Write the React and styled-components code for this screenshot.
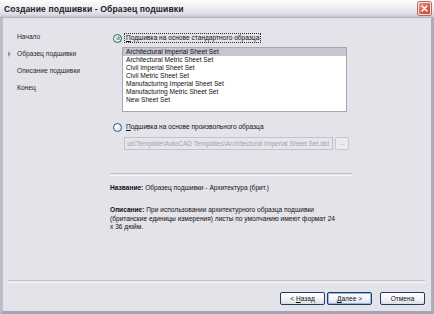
import React from 'react';
import styled, { createGlobalStyle } from 'styled-components';

const GlobalStyle = createGlobalStyle`
  html, body {
    margin: 0;
    padding: 0;
    background: #ffffff;
  }
  body {
    font-family: "Liberation Sans", Arial, sans-serif;
  }
`;

const Window = styled.div`
  width: 434px;
  height: 314px;
  display: flex;
  flex-direction: column;
  overflow: hidden;
`;

const TitleBar = styled.div`
  height: 18px;
  box-sizing: border-box;
  display: flex;
  align-items: center;
  justify-content: space-between;
  padding: 0 3px 0 4px;
  background: linear-gradient(#fdfdfe 0%, #eeeef4 45%, #dcdce6 85%, #c4c4d2 100%);
  border-bottom: 1px solid #b4b4c4;
`;

const Title = styled.span`
  font-size: 8.6px;
  font-weight: bold;
  color: #222222;
  letter-spacing: 0.1px;
`;

const CloseButton = styled.div`
  width: 13px;
  height: 13px;
  box-sizing: border-box;
  border: 1px solid #f4e4e0;
  border-radius: 2px;
  background: linear-gradient(135deg, #ec9a86 0%, #d8604a 55%, #c24a36 100%);
  display: flex;
  align-items: center;
  justify-content: center;
  box-shadow: 0 0 0 1px #b86a5c;
`;

const Frame = styled.div`
  flex: 1;
  display: flex;
  flex-direction: column;
  background: #e4e3ea;
  border-left: 3px solid #bdbccb;
  border-right: 3px solid #aeadbd;
  border-bottom: 3px solid #a6a5b5;
`;

const Main = styled.div`
  flex: 1;
  display: flex;
`;

const Nav = styled.div`
  width: 107px;
  padding: 10px 0 0 5px;
  box-sizing: border-box;
  display: flex;
  flex-direction: column;
`;

const NavItem = styled.div`
  display: flex;
  align-items: center;
  line-height: 17px;
  font-size: 6.7px;
  color: #2a2a2a;
`;

const Marker = styled.span`
  width: 6px;
  height: 6px;
  flex: none;
  box-sizing: border-box;
  display: flex;
  align-items: center;
  margin-right: 3px;
  border-top: ${props => (props.active ? '3px solid transparent' : '0')};
  border-bottom: ${props => (props.active ? '3px solid transparent' : '0')};
  border-left: ${props => (props.active ? '3px solid #9a9aa8' : '0')};
`;

const Content = styled.div`
  flex: 1;
  display: flex;
  flex-direction: column;
  padding-top: 15px;
  font-size: 6.6px;
  color: #111111;
`;

const RadioRow = styled.div`
  display: flex;
  align-items: center;
  height: 10px;
  margin-left: 3px;
  margin-top: ${props => props.gap || 0}px;
`;

const RadioCircle = styled.span`
  width: 9px;
  height: 9px;
  box-sizing: border-box;
  border-radius: 50%;
  border: 1px solid #2c5a8a;
  background: radial-gradient(circle at 35% 35%, #ffffff 0%, #e6e6ee 60%, #cfd0dc 100%);
  display: flex;
  align-items: center;
  justify-content: center;
  margin-right: 3px;
  &::after {
    content: '';
    display: ${props => (props.checked ? 'block' : 'none')};
    width: 4px;
    height: 4px;
    border-radius: 50%;
    background: radial-gradient(circle at 35% 35%, #b4f08a 0%, #4cb82a 70%, #2e8c18 100%);
  }
`;

const RadioLabel = styled.span`
  line-height: 8px;
  padding: 0 1px;
  outline: ${props => (props.focused ? '1px dotted #303030' : 'none')};
  outline-offset: 0;
  white-space: nowrap;
`;

const Mnemonic = styled.span`
  text-decoration: underline;
`;

const ListBox = styled.div`
  margin: 4px 0 0 12px;
  width: 225px;
  height: 65px;
  box-sizing: border-box;
  border: 1px solid #a4a4b2;
  background: #ffffff;
  padding: 0;
`;

const ListItem = styled.div`
  line-height: 8px;
  height: 8px;
  padding-left: 3px;
  white-space: nowrap;
  color: #101010;
  background: ${props => (props.selected ? '#c6c5d0' : 'transparent')};
`;

const PathRow = styled.div`
  display: flex;
  gap: 2px;
  margin: 5px 0 0 14px;
`;

const PathField = styled.div`
  width: 209px;
  height: 13px;
  box-sizing: border-box;
  border: 1px solid #c2c1cc;
  background: #e6e5ec;
  display: flex;
  align-items: center;
  justify-content: flex-end;
  overflow: hidden;
  padding-right: 3px;
  color: #a2a2ae;
  white-space: nowrap;
`;

const BrowseButton = styled.div`
  width: 14px;
  height: 13px;
  box-sizing: border-box;
  border: 1px solid #c8c7d2;
  border-radius: 2px;
  background: #ecebf1;
  color: #a8a8b4;
  display: flex;
  align-items: center;
  justify-content: center;
  line-height: 1;
`;

const Etched = styled.div`
  height: 1px;
  width: ${props => (props.width ? `${props.width}px` : 'auto')};
  margin-top: ${props => props.gap || 0}px;
  border-top: 1px solid #c4c3ce;
  border-bottom: 1px solid #f6f6fa;
`;

const InfoLine = styled.div`
  line-height: 8px;
  margin-top: ${props => props.gap || 0}px;
  white-space: nowrap;
  color: #111111;
`;

const InfoBlock = styled.div`
  line-height: 8.5px;
  margin-top: ${props => props.gap || 0}px;
  color: #111111;
`;

const Footer = styled.div`
  display: flex;
  flex-direction: column;
  padding: 0 6px 6px 5px;
`;

const ButtonRow = styled.div`
  display: flex;
  justify-content: flex-end;
  margin-top: 9px;
`;

const Button = styled.div`
  width: 45px;
  height: 13px;
  box-sizing: border-box;
  margin-left: ${props => props.gap || 0}px;
  border: 1px solid #1c3c6c;
  border-radius: 2px;
  background: linear-gradient(#ffffff 0%, #f2f2f6 60%, #dcdce4 100%);
  box-shadow: ${props => (props.primary ? 'inset 0 0 0 1px #98b4e8' : 'none')};
  display: flex;
  align-items: center;
  justify-content: center;
  font-size: 6.6px;
  color: #111111;
  white-space: pre;
`;

const steps = ['Начало', 'Образец подшивки', 'Описание подшивки', 'Конец'];

const templates = [
  'Architectural Imperial Sheet Set',
  'Architectural Metric Sheet Set',
  'Civil Imperial Sheet Set',
  'Civil Metric Sheet Set',
  'Manufacturing Imperial Sheet Set',
  'Manufacturing Metric Sheet Set',
  'New Sheet Set',
];

const App = () => {
  return (
    <>
      <GlobalStyle />
      <Window>
        <TitleBar>
          <Title>Создание подшивки - Образец подшивки</Title>
          <CloseButton>
            <svg width="7" height="7" viewBox="0 0 7 7">
              <path d="M1 1 L6 6 M6 1 L1 6" stroke="#ffffff" strokeWidth="1.5" strokeLinecap="round" />
            </svg>
          </CloseButton>
        </TitleBar>
        <Frame>
          <Main>
            <Nav>
              {steps.map((step, i) => (
                <NavItem key={step}>
                  <Marker active={i === 1} />
                  {step}
                </NavItem>
              ))}
            </Nav>
            <Content>
              <RadioRow>
                <RadioCircle checked />
                <RadioLabel focused>
                  <Mnemonic>П</Mnemonic>одшивка на основе стандартного образца
                </RadioLabel>
              </RadioRow>
              <ListBox>
                {templates.map((t, i) => (
                  <ListItem key={t} selected={i === 0}>
                    {t}
                  </ListItem>
                ))}
              </ListBox>
              <RadioRow gap={10}>
                <RadioCircle />
                <RadioLabel>
                  <Mnemonic>П</Mnemonic>одшивка на основе произвольного образца
                </RadioLabel>
              </RadioRow>
              <PathRow>
                <PathField>
                  <span>us\Template\AutoCAD Templates\Architectural Imperial Sheet Set.dst</span>
                </PathField>
                <BrowseButton>...</BrowseButton>
              </PathRow>
              <Etched width={242} gap={23} />
              <InfoLine gap={8}>
                <b>Название:</b> Образец подшивки - Архитектура (брит.)
              </InfoLine>
              <InfoBlock gap={14}>
                <b>Описание:</b> При использовании архитектурного образца подшивки
                <br />
                (британские единицы измерения) листы по умолчанию имеют формат 24
                <br />х 36 дюйм.
              </InfoBlock>
            </Content>
          </Main>
          <Footer>
            <Etched />
            <ButtonRow>
              <Button>
                {'< '}
                <Mnemonic>Н</Mnemonic>азад
              </Button>
              <Button primary gap={2}>
                <Mnemonic>Д</Mnemonic>
                {'алее >'}
              </Button>
              <Button gap={8}>Отмена</Button>
            </ButtonRow>
          </Footer>
        </Frame>
      </Window>
    </>
  );
};

export default App;
